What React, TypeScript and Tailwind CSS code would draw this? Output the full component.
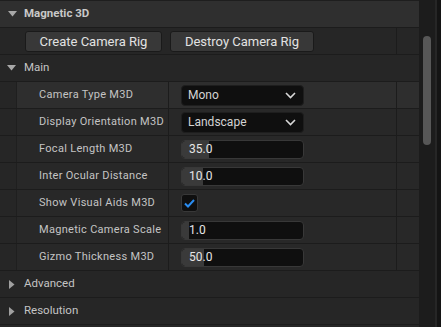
import React from "react";

const font = { fontFamily: "Roboto, 'Noto Sans', sans-serif" };

function Down({ className = "" }: { className?: string }) {
  return (
    <svg width="9" height="6" viewBox="0 0 9 6" className={className}>
      <path d="M0 0 L9 0 L4.5 5.5 Z" fill="#a8a8a8" />
    </svg>
  );
}
function Right() {
  return (
    <svg width="6" height="9" viewBox="0 0 6 9">
      <path d="M0 0 L0 9 L5.5 4.5 Z" fill="#a0a0a0" />
    </svg>
  );
}
function Chevron() {
  return (
    <svg width="11" height="7" viewBox="0 0 11 7">
      <path d="M1 1 L5.5 5.5 L10 1" stroke="#d8d8d8" strokeWidth="1.6" fill="none" />
    </svg>
  );
}

function PropRow({ label, children, hl = false }: { label: string; children: React.ReactNode; hl?: boolean }) {
  return (
    <div className="flex h-[27px] border-b border-[#1c1c1c]">
      <div className="w-[17px] shrink-0 bg-[#262626] border-r border-[#1f1f1f]" />
      <div className={`flex flex-1 ${hl ? "bg-[#2e2e2e]" : "bg-[#282828]"}`}>
        <div className="w-[152px] shrink-0 border-r border-[#1c1c1c] flex items-center pl-[22px] text-[11px] text-[#c4c4c4] tracking-[0.3px]">
          {label}
        </div>
        <div className="flex-1 flex items-center pl-[12px] border-r border-[#1c1c1c]">{children}</div>
        <div className="w-[22px] shrink-0" />
      </div>
    </div>
  );
}

function Combo({ value }: { value: string }) {
  return (
    <div className="w-[123px] h-[21px] rounded-[4px] bg-[#0f0f0f] border border-[#1e1e1e] flex items-center justify-between pl-[6px] pr-[7px] text-[12px] text-[#d4d4d4]">
      <span>{value}</span>
      <Chevron />
    </div>
  );
}

function Num({ value, fill }: { value: string; fill: number }) {
  return (
    <div className="relative w-[123px] h-[19px] rounded-[4px] bg-[#0f0f0f] border border-[#383838] overflow-hidden flex items-center">
      <div className="absolute left-0 top-0 bottom-0 bg-[#3a3a3a] rounded-l-[3px]" style={{ width: fill }} />
      <span className="relative pl-[7px] text-[12px] text-[#e6e6e6]">{value}</span>
    </div>
  );
}

export default function App() {
  return (
    <div style={font} className="w-[441px] h-[327px] bg-[#141414] flex overflow-hidden">
      <div className="w-[419px] flex flex-col bg-[#262626]">
        <div className="h-[28px] shrink-0 bg-[#2f2f2f] border-t border-[#1e1e1e] border-b border-b-[#1c1c1c] flex items-center">
          <Down className="ml-[8px]" />
          <span className="ml-[7px] text-[11.5px] font-bold text-[#c8c8c8]">Magnetic 3D</span>
        </div>
        <div className="h-[27px] shrink-0 flex border-b border-[#1c1c1c] bg-[#262626]">
          <div className="flex-1 flex items-center pl-[25px] gap-[8px] border-r border-[#1c1c1c]">
            <button className="h-[21px] w-[137px] rounded-[3px] bg-[#383838] border border-[#1a1a1a] text-[13px] text-[#e2e2e2]">
              Create Camera Rig
            </button>
            <button className="h-[21px] w-[144px] rounded-[3px] bg-[#383838] border border-[#1a1a1a] text-[13px] text-[#e2e2e2]">
              Destroy Camera Rig
            </button>
          </div>
          <div className="w-[22px]" />
        </div>
        <div className="h-[27px] shrink-0 flex items-center border-b border-[#1c1c1c] bg-[#262626]">
          <Down className="ml-[7px]" />
          <span className="ml-[8px] text-[11.5px] text-[#c4c4c4]">Main</span>
        </div>
        <PropRow label="Camera Type M3D" hl>
          <Combo value="Mono" />
        </PropRow>
        <PropRow label="Display Orientation M3D">
          <Combo value="Landscape" />
        </PropRow>
        <PropRow label="Focal Length M3D">
          <Num value="35.0" fill={27} />
        </PropRow>
        <PropRow label="Inter Ocular Distance">
          <Num value="10.0" fill={21} />
        </PropRow>
        <PropRow label="Show Visual Aids M3D">
          <div className="w-[17px] h-[18px] rounded-[3px] bg-[#0f0f0f] border border-[#383838] flex items-center justify-center">
            <svg width="11" height="9" viewBox="0 0 11 9">
              <path d="M1 4.5 L4 7.5 L10 1" stroke="#2a8cf0" strokeWidth="2" fill="none" />
            </svg>
          </div>
        </PropRow>
        <PropRow label="Magnetic Camera Scale">
          <Num value="1.0" fill={7} />
        </PropRow>
        <PropRow label="Gizmo Thickness M3D">
          <Num value="50.0" fill={22} />
        </PropRow>
        <div className="h-[27px] shrink-0 flex items-center border-b border-[#1c1c1c] bg-[#262626]">
          <span className="ml-[9px]"><Right /></span>
          <span className="ml-[9px] text-[11.5px] text-[#c4c4c4]">Advanced</span>
        </div>
        <div className="h-[27px] shrink-0 flex items-center border-b border-[#1c1c1c] bg-[#262626]">
          <span className="ml-[9px]"><Right /></span>
          <span className="ml-[9px] text-[11.5px] text-[#c4c4c4]">Resolution</span>
        </div>
        <div className="flex-1 bg-[#262626]" />
      </div>
      <div className="w-[16px] bg-[#1c1c1c] pt-[36px] flex justify-center">
        <div className="w-[8px] h-[109px] rounded-full bg-[#575757]" />
      </div>
      <div className="w-[2px] bg-[#262626]" />
      <div className="flex-1 bg-[#141414]" />
    </div>
  );
}
